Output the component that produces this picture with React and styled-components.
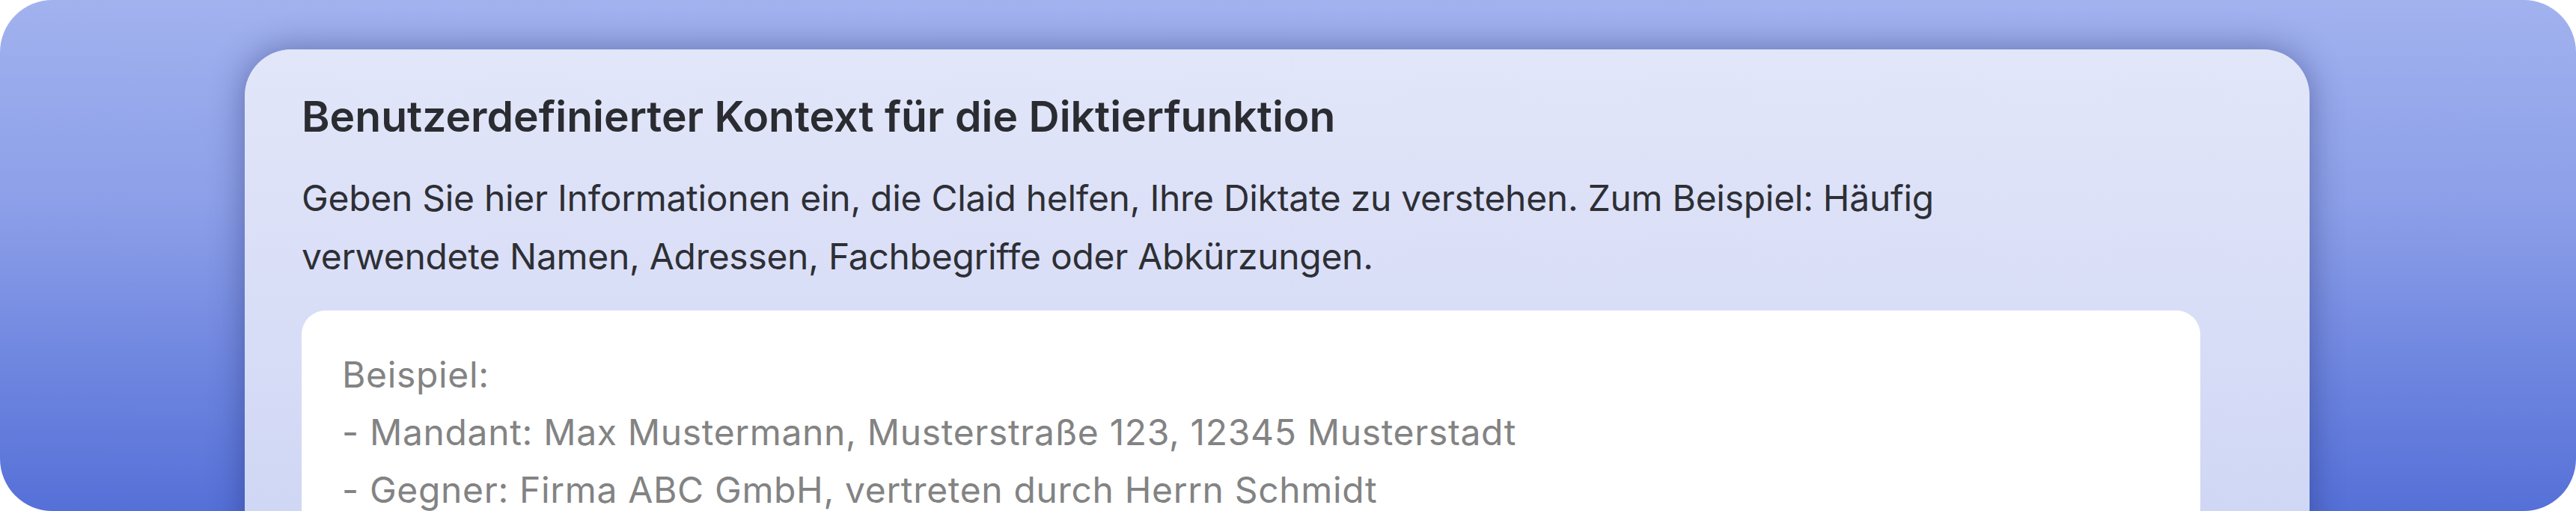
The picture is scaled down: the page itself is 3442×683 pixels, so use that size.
import styled, { createGlobalStyle } from 'styled-components';

const GlobalStyle = createGlobalStyle`
  html, body {
    margin: 0;
    background: #ffffff;
    font-family: Inter, "Noto Sans", sans-serif;
  }
  * {
    box-sizing: border-box;
  }
`;

const Frame = styled.div`
  width: 3442px;
  height: 683px;
  border-radius: 70px;
  overflow: hidden;
  background: linear-gradient(180deg, #a2b2ef 0%, #8c9fe8 40%, #5570d8 100%);
  padding: 66px 0 0 327px;
  display: flex;
  align-items: flex-start;
`;

const Card = styled.section`
  width: 2759px;
  min-height: 700px;
  border-radius: 62px 62px 0 0;
  background: linear-gradient(180deg, #e1e6f9 0%, #d8ddf7 50%, #cad3f2 100%);
  box-shadow: 0 0 46px rgba(25, 35, 95, 0.45);
  padding: 56px 146px 0 76px;
  display: flex;
  flex-direction: column;
`;

const Title = styled.h2`
  margin: 0;
  font-size: 57px;
  line-height: 68px;
  font-weight: 600;
  letter-spacing: 0;
  color: #2b2c31;
`;

const Description = styled.p`
  margin: 36px 0 0;
  max-width: 2400px;
  font-size: 48px;
  line-height: 78px;
  font-weight: 400;
  letter-spacing: -0.3px;
  color: #2e2f35;
`;

const ContextInput = styled.textarea`
  margin-top: 33px;
  width: 2537px;
  height: 420px;
  border: none;
  outline: none;
  resize: none;
  border-radius: 32px;
  background: #ffffff;
  padding: 47px 54px;
  font-family: Inter, "Noto Sans", sans-serif;
  font-size: 48px;
  line-height: 77px;
  letter-spacing: 0.65px;
  color: #2e2f35;

  &::placeholder {
    color: #838383;
  }
`;

const placeholder = [
  'Beispiel:',
  '- Mandant: Max Mustermann, Musterstraße 123, 12345 Musterstadt',
  '- Gegner: Firma ABC GmbH, vertreten durch Herrn Schmidt',
].join('\n');

const App = () => (
  <>
    <GlobalStyle />
    <Frame>
      <Card>
        <Title>Benutzerdefinierter Kontext für die Diktierfunktion</Title>
        <Description>
          Geben Sie hier Informationen ein, die Claid helfen, Ihre Diktate zu verstehen. Zum
          Beispiel: Häufig verwendete Namen, Adressen, Fachbegriffe oder Abkürzungen.
        </Description>
        <ContextInput placeholder={placeholder} />
      </Card>
    </Frame>
  </>
);

export default App;
